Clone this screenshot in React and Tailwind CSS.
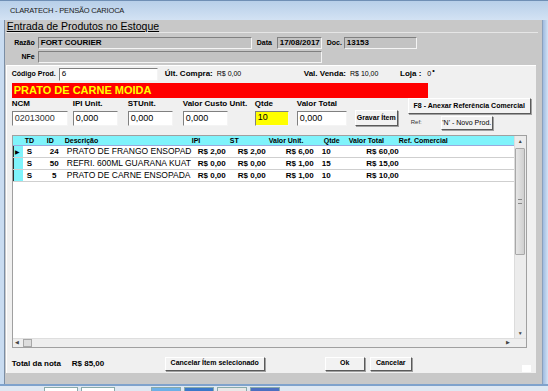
import React from 'react';

const font = { fontFamily: '"Liberation Sans", Arial, sans-serif' };

function Field({ w, value = '', gray = false, bold = false, h = 'h-[13px]', extra = '' }) {
  return (
    <div
      className={`${w} ${h} ${gray ? 'bg-[#c3c3c3]' : 'bg-white'} border border-t-[#808080] border-l-[#808080] border-b-[#f4f4f4] border-r-[#f4f4f4] flex items-center px-[2px] overflow-hidden ${extra}`}
    >
      <span className={`${bold ? 'font-bold text-[8px]' : 'text-[8px]'} text-black leading-none whitespace-nowrap`}>{value}</span>
    </div>
  );
}

function Btn({ w, h = 'h-[15px]', children }) {
  return (
    <div
      className={`${w} ${h} bg-[#f2f2f2] border border-t-white border-l-white border-b-[#5a5a5a] border-r-[#5a5a5a] shadow-[1px_1px_0_#a0a0a0] flex items-center justify-center text-[7px] font-bold text-black whitespace-nowrap`}
    >
      {children}
    </div>
  );
}

// descrições como aparecem na coluna (cortadas pela largura da grade)
const rows = [
  { td: 'S', id: '24', desc: 'PRATO DE FRANGO ENSOPAD', ipi: 'R$ 2,00', st: 'R$ 2,00', vu: 'R$ 6,00', q: '10', vt: 'R$ 60,00', sel: true },
  { td: 'S', id: '50', desc: 'REFRI. 600ML GUARANA  KUAT', ipi: 'R$ 0,00', st: 'R$ 0,00', vu: 'R$ 1,00', q: '15', vt: 'R$ 15,00' },
  { td: 'S', id: '5', desc: 'PRATO DE CARNE ENSOPADA', ipi: 'R$ 0,00', st: 'R$ 0,00', vu: 'R$ 1,00', q: '10', vt: 'R$ 10,00' },
];

export default function App() {
  return (
    <div style={font} className="w-[548px] h-[391px] overflow-hidden flex flex-col bg-[#c5d8ee]">
      {/* Title bar */}
      <div className="h-[20px] bg-gradient-to-b from-[#b7cfe9] to-[#d3e2f3] border-t border-[#6f8fb5] flex items-center pl-[10px]">
        <span className="text-[7.5px] text-[#1a1a1a] tracking-tight">CLARATECH - PENSÃO CARIOCA</span>
      </div>

      <div className="flex flex-1 min-h-0">
        <div className="w-[5px] bg-[#c9dcf1]" />
        {/* Client area */}
        <div className="flex-1 bg-[#c8c8c8] border-l border-[#7b8ea5] flex flex-col">
          <div className="h-[12px] pl-[2px] flex items-center">
            <span className="text-[10.5px] underline text-black leading-none">Entrada de Produtos no Estoque</span>
          </div>

          {/* Header group */}
          <div className="mx-[1px] mr-[4px] border-t border-[#e6e6e6] pt-[4px] pb-[2px] flex flex-col gap-[2px]">
            <div className="flex items-center">
              <span className="w-[32px] text-right pr-[3px] text-[7px] font-bold">Razão</span>
              <Field w="w-[214px]" h="h-[12px]" value="FORT COURIER" gray bold />
              <span className="ml-[5px] w-[20px] text-[7px] font-bold">Data</span>
              <Field w="w-[45px]" h="h-[12px]" value="17/08/2017" gray bold />
              <span className="ml-[5px] w-[17px] text-[7px] font-bold">Doc.</span>
              <Field w="w-[73px]" h="h-[12px]" value="13153" gray bold />
            </div>
            <div className="flex items-center">
              <span className="w-[32px] text-right pr-[3px] text-[7px] font-bold">NFe</span>
              <Field w="w-[284px]" h="h-[12px]" gray />
            </div>
          </div>

          {/* Item panel */}
          <div className="ml-[1px] mr-[6px] bg-[#f0f0f0] border-t border-l border-white px-[5px] pt-[1px] flex flex-col h-[308px]">
            {/* Código row */}
            <div className="flex items-center h-[14px]">
              <span className="w-[47px] text-[7px] font-bold">Código Prod.</span>
              <Field w="w-[99px]" value="6" />
              <span className="ml-[7px] text-[8px] font-bold">Últ. Compra:</span>
              <span className="ml-[4px] w-[87px] text-[7px]">R$ 0,00</span>
              <span className="text-[8px] font-bold">Val. Venda:</span>
              <span className="ml-[4px] w-[50px] text-[7px]">R$ 10,00</span>
              <span className="text-[8px] font-bold">Loja :</span>
              <span className="ml-[6px] text-[7px] relative">
                0<span className="absolute -top-[3px] left-[5px] text-[7px] font-bold">•</span>
              </span>
            </div>

            {/* Product name bar */}
            <div className="mt-[2px] w-[416px] h-[15px] bg-[#ff0000] flex items-center pl-[2px]">
              <span className="text-[11px] font-bold text-[#ffff00] leading-none">PRATO DE CARNE MOIDA</span>
            </div>

            {/* Values row */}
            <div className="flex h-[36px]">
              <div className="flex flex-col">
                <div className="flex h-[10px] items-end text-[8px] font-bold leading-none">
                  <span className="w-[61px]">NCM</span>
                  <span className="w-[55px]">IPI Unit.</span>
                  <span className="w-[55px]">STUnit.</span>
                  <span className="w-[72px]">Valor Custo Unit.</span>
                  <span className="w-[42px]">Qtde</span>
                  <span>Valor Total</span>
                </div>
                <div className="flex items-center mt-[2px]">
                  <div className="w-[61px]"><Field w="w-[56px]" h="h-[15px]" value={<span className="text-[9px] text-[#333]">02013000</span>} /></div>
                  <div className="w-[55px]"><Field w="w-[45px]" h="h-[15px]" value={<span className="text-[9px]">0,000</span>} /></div>
                  <div className="w-[55px]"><Field w="w-[45px]" h="h-[15px]" value={<span className="text-[9px]">0,000</span>} /></div>
                  <div className="w-[72px]"><Field w="w-[45px]" h="h-[15px]" value={<span className="text-[9px]">0,000</span>} /></div>
                  <div className="w-[42px]">
                    <div className="w-[34px] h-[15px] bg-[#ffff00] border border-t-[#808080] border-l-[#808080] border-b-[#f4f4f4] border-r-[#f4f4f4] flex items-center px-[2px] text-[9px]">10</div>
                  </div>
                  <Field w="w-[50px]" h="h-[15px]" value={<span className="text-[9px]">0,000</span>} />
                  <div className="ml-[8px]"><Btn w="w-[43px]" h="h-[16px]">Gravar Ítem</Btn></div>
                </div>
              </div>
              <div className="ml-[10px] flex flex-col">
                <Btn w="w-[123px]" h="h-[16px]">F8 - Anexar Referência Comercial</Btn>
                <div className="flex items-start mt-[2px]">
                  <span className="ml-[3px] mt-[2px] w-[30px] text-[6px] text-[#333]">Ref:</span>
                  <Btn w="w-[52px]" h="h-[14px]"><span className="font-normal">'N' - Novo Prod.</span></Btn>
                </div>
              </div>
            </div>

            {/* Grid */}
            <div className="mt-[1px] w-[515px] h-[213px] bg-white border border-[#a0a0a0] flex flex-col">
              <div className="flex flex-1 min-h-0">
                <div className="flex-1 flex flex-col">
                  <div className="h-[10px] bg-[#7ff3fb] flex items-center text-[7px] font-bold leading-none border-b border-[#9ad]">
                    <span className="w-[10px]" />
                    <span className="w-[21px] pl-[2px]">TD</span>
                    <span className="w-[21px] pl-[3px]">ID</span>
                    <span className="w-[127px]">Descrição</span>
                    <span className="w-[38px]">IPI</span>
                    <span className="w-[39px]">ST</span>
                    <span className="w-[55px]">Valor Unit.</span>
                    <span className="w-[25px]">Qtde</span>
                    <span className="w-[50px]">Valor Total</span>
                    <span>Ref. Comercial</span>
                  </div>
                  {rows.map((r) => (
                    <div key={r.id} className="h-[12px] flex items-center border-b border-[#cfcfcf] text-[8px] leading-none">
                      <span className="w-[10px] h-full bg-[#7ff3fb] border-l border-[#303030] flex items-center pl-[1px] text-[6px]">
                        {r.sel ? '▶' : ''}
                      </span>
                      <span className="w-[21px] pl-[4px] font-bold">{r.td}</span>
                      <span className="w-[21px] text-center font-bold">{r.id}</span>
                      <span className="w-[126px] pl-[2px] whitespace-nowrap text-[8.5px]">{r.desc}</span>
                      <span className="w-[40px] pl-[7px] font-bold">{r.ipi}</span>
                      <span className="w-[38px] pl-[7px] font-bold">{r.st}</span>
                      <span className="w-[53px] text-right pr-[8px] font-bold">{r.vu}</span>
                      <span className="w-[25px] font-bold">{r.q}</span>
                      <span className="w-[53px] text-right pr-[1px] font-bold">{r.vt}</span>
                    </div>
                  ))}
                </div>
                {/* vertical scrollbar */}
                <div className="w-[12px] bg-[#ececec] border-l border-[#dcdcdc] flex flex-col items-center">
                  <span className="h-[10px] text-[5px] leading-[10px] text-[#444]">▲</span>
                  <div className="mt-[2px] w-[10px] h-[107px] bg-gradient-to-r from-[#e6e6e6] to-[#d0d0d0] border border-[#a8a8a8] rounded-[1px] flex items-center justify-center">
                    <div className="w-[4px] h-[5px] border-y border-[#888]" />
                  </div>
                  <div className="flex-1" />
                  <span className="h-[10px] text-[5px] leading-[10px] text-[#444]">▼</span>
                </div>
              </div>
              {/* horizontal scrollbar */}
              <div className="h-[9px] bg-[#eeeeee] border-t border-[#dedede] flex items-center">
                <span className="ml-[2px] text-[5px] text-[#444]">◀</span>
                <div className="ml-[4px] w-[9px] h-[8px] bg-[#dddddd] border border-[#a8a8a8]" />
                <div className="flex-1" />
                <span className="mr-[16px] text-[5px] text-[#444]">▶</span>
              </div>
            </div>

            {/* Footer row */}
            <div className="flex items-center mt-[8px] h-[15px]">
              <span className="text-[8px] font-bold w-[60px]">Total da nota</span>
              <span className="text-[8px] font-bold w-[93px]">R$ 85,00</span>
              <Btn w="w-[100px]" h="h-[14px]">Cancelar Ítem selecionado</Btn>
              <div className="w-[60px]" />
              <Btn w="w-[40px]" h="h-[14px]">Ok</Btn>
              <div className="w-[5px]" />
              <Btn w="w-[42px]" h="h-[14px]">Cancelar</Btn>
              <div className="flex-1" />
              <div className="w-[9px] h-[7px] bg-white mt-[10px]" />
            </div>
          </div>
          <div className="flex-1" />
        </div>
        <div className="w-[8px] bg-gradient-to-r from-[#9fbbe0] to-[#d2e2f4] border-l border-[#8aa0bd]" />
      </div>

      {/* bottom frame / taskbar strip */}
      <div className="h-[2px] bg-[#7fa2cc]" />
      <div className="h-[5px] bg-[#dfe8f2] flex items-end gap-[3px] pl-[44px]">
        <div className="w-[34px] h-[4px] bg-white border-x border-t border-[#8aa]" />
        <div className="w-[34px] h-[4px] bg-white border-x border-t border-[#8aa]" />
        <div className="w-[30px] h-[4px]" />
        <div className="w-[30px] h-[4px] bg-[#6db0e6] border-x border-t border-[#8aa]" />
        <div className="w-[30px] h-[4px] bg-[#3a78c8] border-x border-t border-[#8aa]" />
        <div className="w-[30px] h-[4px] bg-[#e8e8e8] border-x border-t border-[#8aa]" />
        <div className="w-[30px] h-[4px] bg-[#4b6fc0] border-x border-t border-[#8aa]" />
      </div>
    </div>
  );
}
